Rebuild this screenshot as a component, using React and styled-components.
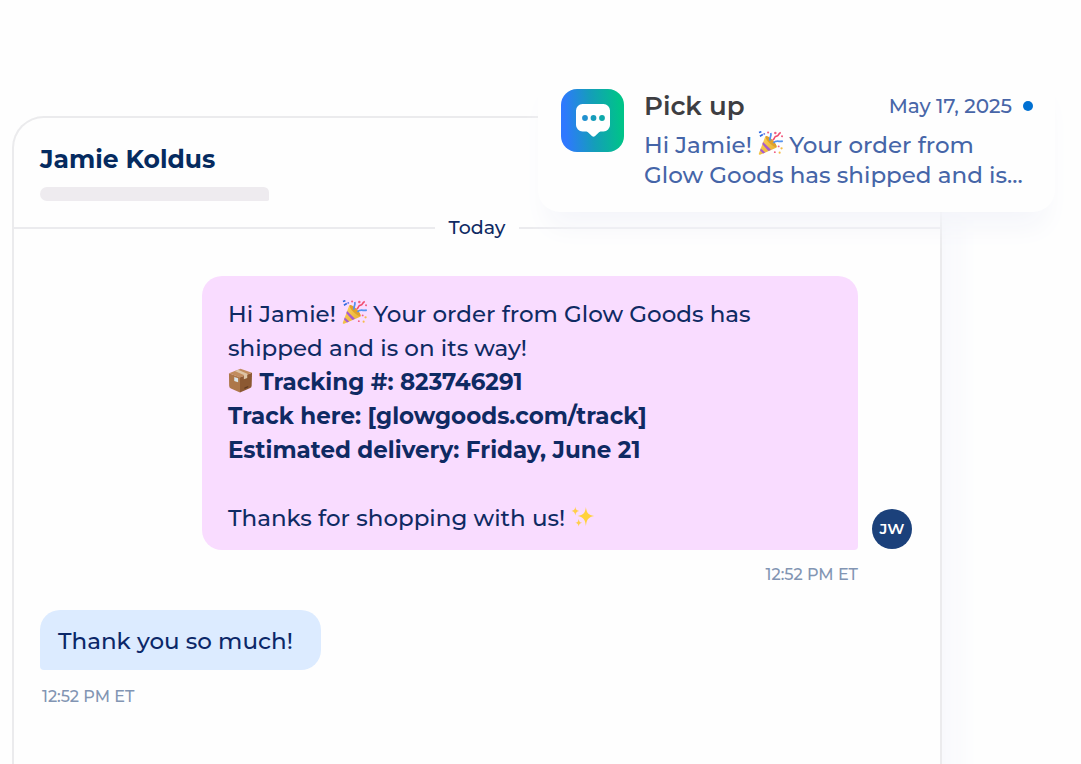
import styled, { createGlobalStyle } from 'styled-components';

const GlobalStyle = createGlobalStyle`
  * {
    box-sizing: border-box;
  }
  body {
    margin: 0;
    background: #fefefe;
    font-family: Montserrat, Inter, sans-serif;
    font-weight: 500;
    color: #0f2a63;
  }
  h1, h2, p {
    margin: 0;
  }
`;

const Page = styled.div`
  position: relative;
  display: flex;
  min-height: 100vh;
  padding: 116px 139px 0 12px;
`;

const Panel = styled.main`
  flex: 1;
  min-width: 0;
  border: 2px solid #ebebed;
  border-bottom: 0;
  border-radius: 32px 32px 0 0;
  background: #fefefe;
  box-shadow: 24px 60px 30px -10px #f7f8fc;
`;

const Header = styled.header`
  padding: 24px 26px 14px;
`;

const Contact = styled.h1`
  font-size: 25px;
  line-height: 34px;
  font-weight: 700;
  color: #052b60;
`;

const Placeholder = styled.div`
  width: 229px;
  height: 14px;
  margin-top: 11px;
  border-radius: 8px 6px 2px 8px;
  background: #eeebef;
`;

const Divider = styled.div`
  display: flex;
  align-items: center;
  gap: 14px;
  font-size: 19px;
  line-height: 26px;
  font-weight: 500;
  &::before,
  &::after {
    content: '';
    flex: 1;
    height: 2px;
    background: #ebebee;
  }
`;

const Thread = styled.section`
  display: flex;
  flex-direction: column;
  gap: 22px;
  padding: 35px 28px 40px 26px;
`;

const Message = styled.article`
  display: flex;
  flex-direction: column;
  gap: ${({ $sent }) => ($sent ? '12px' : '14px')};
  align-items: ${({ $sent }) => ($sent ? 'flex-end' : 'flex-start')};
`;

const BubbleRow = styled.div`
  display: flex;
  align-items: flex-end;
  justify-content: flex-end;
  gap: 14px;
  width: 100%;
`;

const SentBubble = styled.div`
  flex: 0 1 656px;
  padding: 21px 26px 15px;
  border-radius: 20px 20px 4px 20px;
  background: #f9dcff;
  font-size: 23px;
  line-height: 34px;
`;

const ReplyBubble = styled.div`
  padding: 14px 28px 12px 18px;
  border-radius: 20px 20px 20px 4px;
  background: #dcebff;
  font-size: 23px;
  line-height: 34px;
  color: #0b2768;
`;

const Strong = styled.p`
  font-weight: 700;
`;

const Blank = styled.p`
  height: 34px;
`;

const Avatar = styled.div`
  flex: none;
  display: grid;
  place-items: center;
  width: 40px;
  height: 40px;
  margin-bottom: 1px;
  border-radius: 50%;
  background: #1b417b;
  color: #fff;
  font-size: 15px;
  line-height: 18px;
  font-weight: 600;
`;

const Time = styled.time`
  font-size: 16px;
  line-height: 26px;
  color: #8295b3;
  margin: ${({ $sent }) => ($sent ? '0 54px 0 0' : '0 0 0 2px')};
`;

const Notification = styled.aside`
  position: absolute;
  top: 65px;
  right: 26px;
  display: flex;
  gap: 20px;
  width: 517px;
  padding: 24px 22px 22px 23px;
  border-radius: 22px;
  background: #fefefe;
  box-shadow: 0 24px 28px -10px #f4f5fa;
`;

const NotificationBody = styled.div`
  flex: 1;
  min-width: 0;
`;

const NotificationTop = styled.div`
  display: flex;
  align-items: center;
  justify-content: space-between;
  height: 34px;
  margin-bottom: 7px;
`;

const NotificationTitle = styled.h2`
  font-size: 26px;
  font-weight: 600;
  color: #3e3e42;
`;

const NotificationDate = styled.span`
  display: flex;
  align-items: center;
  gap: 11px;
  font-size: 20px;
  color: #4866a8;
  &::after {
    content: '';
    width: 10px;
    height: 10px;
    border-radius: 50%;
    background: #0070d2;
  }
`;

const NotificationText = styled.p`
  font-size: 23px;
  line-height: 30px;
  color: #4565a8;
`;

const AppIcon = styled.svg`
  flex: none;
  width: 63px;
  height: 63px;
`;

const Emoji = styled.svg`
  width: 25px;
  height: 25px;
  vertical-align: -3px;
`;

const Party = () => (
  <Emoji viewBox="0 0 26 26" aria-hidden="true">
    <defs>
      <linearGradient id="cone" x1="0" y1="0" x2="1" y2="1">
        <stop offset="0" stopColor="#ffd85c" />
        <stop offset="1" stopColor="#e5aa30" />
      </linearGradient>
    </defs>
    <path d="M7.600 5.500C9.500 4.500 19 13 19.600 16.200c.1.8-.5 1.200-1.200 1.500L2.200 24.700c-1 .4-1.600-.2-1.300-1.200Z" fill="url(#cone)" />
    <path d="m5.200 11.500 8.300 8.100-2.600 1.100-6.400-6.900Zm-2.300 6.600 4.600 4.200-2.300 1-3-2.900Z" fill="#a65bd0" />
    <ellipse cx="13.500" cy="10.900" rx="2.300" ry="7.600" transform="rotate(-45 13.500 10.900)" fill="#e0a02c" />
    <path d="M12.500 10c-.8-3.600 1.800-4.300.8-8M16 12.300c3.200-3.200 5.800-.8 9.800-1.700" fill="none" stroke="#5391ef" strokeWidth="1.800" />
    <path d="M15.300 9.500c3.200-2.200.7-3.700 4.200-4.200 2.700-.4 1-2.500 4.200-3.700" fill="none" stroke="#f14e70" strokeWidth="1.700" />
    <path d="m1 1.500 2.500-.8M2 5.500l3-1.800" stroke="#2d69df" strokeWidth="1.700" />
    <g fill="#f26084">
      <circle cx="10.500" cy="1.500" r="1.100" />
      <circle cx="18" cy="2" r="1.300" />
      <circle cx="25" cy="5.500" r="1.100" />
      <circle cx="17.500" cy="22" r="1" />
      <circle cx="21.500" cy="16" r="1" />
    </g>
    <circle cx="24.500" cy="18" r="1.200" fill="#f5bd4a" />
    <circle cx="22.500" cy="22.500" r="1.100" fill="#f5bd4a" />
    <circle cx="6.500" cy="3" r="1" fill="#6a7ae5" />
  </Emoji>
);

const Package = () => (
  <Emoji viewBox="0 0 26 26" aria-hidden="true">
    <path d="M1 5.500 12.500 9.500v16L3 21.400Q1.200 20.500 1.200 18.500Z" fill="#ad7749" />
    <path d="M12.500 9.500 25 5l-.4 13.500q-.1 1.700-1.500 2.400L12.500 25.500Z" fill="#8c5932" />
    <path d="M1 5.500 13 .8 25 5 12.500 9.800Z" fill="#c18c5d" />
    <path d="m7 3.200 3.500-1.300 9.500 4v4.600l-3.500 1.300V7.200Z" fill="#ddc4a5" />
    <path d="m6.500 9.300 4 1.400v4.200l-4-1.500Z" fill="#dbe5e8" />
    <path d="m17 20.300 4-1.700v1.500l-4 1.700Z" fill="#603a22" />
  </Emoji>
);

const Sparkles = () => (
  <Emoji viewBox="0 0 26 26" aria-hidden="true">
    <path d="M15.500 3c.8 6 2 8.300 8.500 9.500-6.500 1.500-7.700 4-8.500 10.500-.8-6.500-2-9-8.500-10.500C13.500 11.300 14.700 9 15.500 3Z" fill="#ffd23d" />
    <path d="M4.500 2.500c.4 3 1.200 4.200 4 4.700-2.800.6-3.600 1.800-4 4.800-.4-3-1.200-4.200-4-4.800 2.800-.5 3.600-1.700 4-4.700ZM8 15.500c.4 2.600 1.100 3.500 3.500 4-2.400.5-3.100 1.500-3.500 4-.4-2.500-1.100-3.500-3.500-4 2.400-.5 3.100-1.400 3.500-4Z" fill="#ffce4b" />
  </Emoji>
);

const ChatIcon = () => (
  <AppIcon viewBox="0 0 63 63" aria-hidden="true">
    <defs>
      <linearGradient id="tile" x1="0" y1=".54" x2="1" y2=".46">
        <stop offset="0.050" stopColor="#2f78ff" />
        <stop offset="0.500" stopColor="#149eb9" />
        <stop offset="0.950" stopColor="#00c389" />
      </linearGradient>
    </defs>
    <rect width="63" height="63" rx="16" fill="url(#tile)" />
    <path d="M21.500 15h21a6.500 6.500 0 0 1 6.500 6.500v14.500a6.500 6.500 0 0 1-6.500 6.500h-3q-1.200.2-2 1.200l-3.400 3.300q-1.600 1.400-3.200 0l-3.400-3.300q-.8-1-2-1.200h-4a6.500 6.500 0 0 1-6.500-6.500V21.500a6.500 6.500 0 0 1 6.500-6.500Z" fill="#fff" />
    <circle cx="24" cy="29" r="2.900" fill="#2191cf" />
    <circle cx="32.500" cy="29" r="2.900" fill="#169dbb" />
    <circle cx="41" cy="29" r="2.900" fill="#0da9aa" />
  </AppIcon>
);

const App = () => {
  return (
    <>
      <GlobalStyle />
      <Page>
        <Panel>
          <Header>
            <Contact>Jamie Koldus</Contact>
            <Placeholder />
          </Header>
          <Divider>Today</Divider>
          <Thread>
            <Message $sent>
              <BubbleRow>
                <SentBubble>
                  <p>
                    Hi Jamie! <Party /> Your order from Glow Goods has shipped and is on its way!
                  </p>
                  <Strong>
                    <Package /> Tracking #: 823746291
                  </Strong>
                  <Strong>Track here: [glowgoods.com/track]</Strong>
                  <Strong>Estimated delivery: Friday, June 21</Strong>
                  <Blank />
                  <p>
                    Thanks for shopping with us! <Sparkles />
                  </p>
                </SentBubble>
                <Avatar>JW</Avatar>
              </BubbleRow>
              <Time $sent>12:52 PM ET</Time>
            </Message>
            <Message>
              <ReplyBubble>Thank you so much!</ReplyBubble>
              <Time>12:52 PM ET</Time>
            </Message>
          </Thread>
        </Panel>
        <Notification>
          <ChatIcon />
          <NotificationBody>
            <NotificationTop>
              <NotificationTitle>Pick up</NotificationTitle>
              <NotificationDate>May 17, 2025</NotificationDate>
            </NotificationTop>
            <NotificationText>
              Hi Jamie! <Party /> Your order from Glow Goods has shipped and is...
            </NotificationText>
          </NotificationBody>
        </Notification>
      </Page>
    </>
  );
};

export default App;
